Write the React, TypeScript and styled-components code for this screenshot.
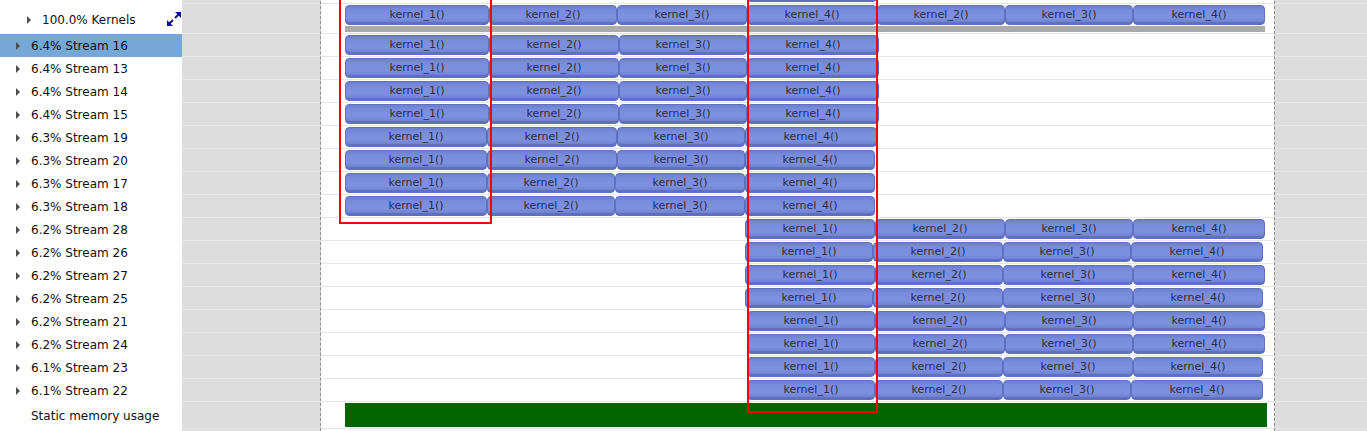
import styled, { createGlobalStyle } from 'styled-components';

const GlobalStyle = createGlobalStyle`
  html, body {
    margin: 0;
    padding: 0;
    background: #ffffff;
    overflow: hidden;
  }
  body {
    font-family: "DejaVu Sans", "Liberation Sans", sans-serif;
  }
`;

// window (white area) starts at this page x
const WINDOW_X = 321;

type Span = [number, number, string];

type Lane = {
  label: string;
  pct?: string;
  kind: 'ghost' | 'group' | 'stream' | 'memory';
  kernels: Span[];
  selected?: boolean;
};

const A = (a: number, b: number, c: number, d: number, e: number): Span[] => [
  [a, b, 'kernel_1()'],
  [b, c, 'kernel_2()'],
  [c, d, 'kernel_3()'],
  [d, e, 'kernel_4()'],
];

const lanes: Lane[] = [
  // row above, scrolled almost out of view
  { label: '', kind: 'ghost', kernels: [[747, 877, '']] },
  {
    label: 'Kernels',
    pct: '100.0%',
    kind: 'group',
    kernels: [
      [345, 489, 'kernel_1()'],
      [489, 617, 'kernel_2()'],
      [617, 747, 'kernel_3()'],
      [747, 877, 'kernel_4()'],
      [877, 1005, 'kernel_2()'],
      [1005, 1133, 'kernel_3()'],
      [1133, 1265, 'kernel_4()'],
    ],
  },
  { label: 'Stream 16', pct: '6.4%', kind: 'stream', selected: true, kernels: A(345, 489, 619, 747, 879) },
  { label: 'Stream 13', pct: '6.4%', kind: 'stream', kernels: A(345, 489, 619, 747, 879) },
  { label: 'Stream 14', pct: '6.4%', kind: 'stream', kernels: A(345, 489, 619, 747, 879) },
  { label: 'Stream 15', pct: '6.4%', kind: 'stream', kernels: A(345, 489, 619, 747, 879) },
  { label: 'Stream 19', pct: '6.3%', kind: 'stream', kernels: A(345, 487, 617, 745, 877) },
  { label: 'Stream 20', pct: '6.3%', kind: 'stream', kernels: A(345, 487, 617, 745, 875) },
  { label: 'Stream 17', pct: '6.3%', kind: 'stream', kernels: A(345, 487, 615, 745, 875) },
  { label: 'Stream 18', pct: '6.3%', kind: 'stream', kernels: A(345, 487, 615, 745, 875) },
  { label: 'Stream 28', pct: '6.2%', kind: 'stream', kernels: A(745, 875, 1005, 1133, 1265) },
  { label: 'Stream 26', pct: '6.2%', kind: 'stream', kernels: A(745, 873, 1003, 1131, 1263) },
  { label: 'Stream 27', pct: '6.2%', kind: 'stream', kernels: A(745, 875, 1003, 1133, 1265) },
  { label: 'Stream 25', pct: '6.2%', kind: 'stream', kernels: A(745, 873, 1003, 1133, 1263) },
  { label: 'Stream 21', pct: '6.2%', kind: 'stream', kernels: A(747, 875, 1005, 1133, 1265) },
  { label: 'Stream 24', pct: '6.2%', kind: 'stream', kernels: A(747, 875, 1005, 1133, 1265) },
  { label: 'Stream 23', pct: '6.1%', kind: 'stream', kernels: A(747, 875, 1003, 1133, 1263) },
  { label: 'Stream 22', pct: '6.1%', kind: 'stream', kernels: A(747, 875, 1003, 1131, 1263) },
  { label: 'Static memory usage', kind: 'memory', kernels: [] },
];

const heights = { ghost: 23, group: 30, stream: 23, memory: 27 };

const Page = styled.div`
  position: relative;
  display: flex;
  width: 1367px;
  height: 431px;
  overflow: hidden;
`;

const Sidebar = styled.div`
  width: 182px;
  flex-shrink: 0;
  background: #ffffff;
  margin-top: -19px;
`;

const NameRow = styled.div<{ $h: number; $selected?: boolean; $indent: number }>`
  height: ${p => p.$h}px;
  box-sizing: border-box;
  border-bottom: 1px solid ${p => (p.$selected ? '#75a8d6' : 'transparent')};
  display: flex;
  align-items: center;
  padding-left: ${p => p.$indent}px;
  padding-top: 2px;
  background: ${p => (p.$selected ? '#75a8d6' : 'transparent')};
  font-size: 12px;
  color: #111111;
  white-space: nowrap;
`;

const Caret = styled.span<{ $hidden?: boolean }>`
  width: 0;
  height: 0;
  border-top: 4px solid transparent;
  border-bottom: 4px solid transparent;
  border-left: 4px solid ${p => (p.$hidden ? 'transparent' : '#4e4e4e')};
  margin-right: 11px;
  flex-shrink: 0;
`;

const ExpandButton = styled.span`
  margin-left: auto;
  margin-right: 1px;
  margin-top: -1px;
  width: 14px;
  height: 14px;
  display: flex;
`;

const Timeline = styled.div`
  flex: 1;
  display: flex;
  background: #dcdcdc;
`;

const Margin = styled.div<{ $side: 'left' | 'right' }>`
  width: ${p => (p.$side === 'left' ? '138px' : '92px')};
  flex-shrink: 0;
  background: #dcdcdc;
  border-${p => (p.$side === 'left' ? 'right' : 'left')}: 1px dashed #8e8e8e;
  margin-top: -19px;
`;

const Window = styled.div`
  width: 953px;
  flex-shrink: 0;
  background: #ffffff;
  margin-top: -19px;
`;

const LaneRow = styled.div<{ $h: number; $tone: 'white' | 'gray' }>`
  position: relative;
  height: ${p => p.$h}px;
  box-sizing: border-box;
  border-bottom: 1px solid ${p => (p.$tone === 'white' ? '#e6e6e6' : '#e8e8e8')};
`;

const KernelBlock = styled.div`
  position: absolute;
  top: 1px;
  height: 20px;
  box-sizing: border-box;
  border: 1px solid #5f70c0;
  border-radius: 4px;
  background: linear-gradient(to bottom, #6d80d0 0%, #798ddc 25%, #7d91e0 65%, #6a7bc8 100%);
  box-shadow: inset 0 -2px 0 rgba(70, 85, 170, 0.35);
  color: #2a2f48;
  font-size: 11px;
  line-height: 18px;
  text-align: center;
  white-space: nowrap;
  overflow: hidden;
`;

const SummaryBar = styled.div`
  position: absolute;
  top: 22px;
  height: 6px;
  background: #aaaaaa;
`;

const MemoryBar = styled.div`
  position: absolute;
  top: 1px;
  height: 24px;
  background: #006400;
`;

const Highlight = styled.div`
  position: absolute;
  box-sizing: border-box;
  border: 2px solid #ff0000;
  pointer-events: none;
`;

const ExpandIcon = () => (
  <svg width="14" height="14" viewBox="0 0 14 14">
    <g fill="#10108c" stroke="#10108c">
      <polygon points="14,0 14,6 8,0" stroke="none" />
      <line x1="12" y1="2" x2="8" y2="6" strokeWidth="2" />
      <polygon points="0,14 0,8 6,14" stroke="none" />
      <line x1="2" y1="12" x2="6" y2="8" strokeWidth="2" />
    </g>
  </svg>
);

const MarginLanes = ({ side }: { side: 'left' | 'right' }) => (
  <Margin $side={side}>
    {lanes.map((l, i) => (
      <LaneRow key={i} $h={heights[l.kind]} $tone="gray" />
    ))}
  </Margin>
);

export default function App() {
  return (
    <Page>
      <GlobalStyle />
      <Sidebar>
        {lanes.map((l, i) => (
          <NameRow
            key={i}
            $h={heights[l.kind]}
            $selected={l.selected}
            $indent={l.kind === 'group' ? 27 : 16}
          >
            {l.kind !== 'ghost' && <Caret $hidden={l.kind === 'memory'} />}
            {l.pct ? `${l.pct} ${l.label}` : l.label}
            {l.kind === 'group' && (
              <ExpandButton>
                <ExpandIcon />
              </ExpandButton>
            )}
          </NameRow>
        ))}
      </Sidebar>
      <Timeline>
        <MarginLanes side="left" />
        <Window>
          {lanes.map((l, i) => (
            <LaneRow key={i} $h={heights[l.kind]} $tone="white">
              {l.kernels.map(([a, b, name], k) => (
                <KernelBlock key={k} style={{ left: a - WINDOW_X, width: b - a }}>
                  {name}
                </KernelBlock>
              ))}
              {l.kind === 'group' && (
                <SummaryBar style={{ left: 345 - WINDOW_X, width: 1265 - 345 }} />
              )}
              {l.kind === 'memory' && (
                <MemoryBar style={{ left: 345 - WINDOW_X, width: 1267 - 345 }} />
              )}
            </LaneRow>
          ))}
        </Window>
        <MarginLanes side="right" />
      </Timeline>
      <Highlight style={{ left: 339, top: -2, width: 153, height: 226 }} />
      <Highlight style={{ left: 747, top: -2, width: 131, height: 415 }} />
    </Page>
  );
}
